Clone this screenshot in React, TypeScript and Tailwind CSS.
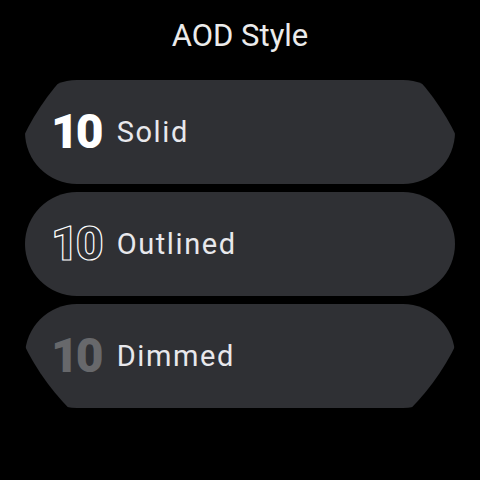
const options = [
  { label: 'Solid', numClass: 'text-white' },
  { label: 'Outlined', numClass: 'text-transparent [-webkit-text-stroke:1.2px_#ffffff]' },
  { label: 'Dimmed', numClass: 'text-[#67686b]' },
];

export default function App() {
  return (
    <div className="h-[480px] w-[480px] bg-black">
      <div
        className="flex h-[480px] w-[480px] flex-col items-center overflow-hidden rounded-full bg-black"
        style={{ fontFamily: 'Roboto, "Noto Sans", sans-serif' }}
      >
        <h1 className="pt-[18px] text-[31px] leading-[36px] font-normal text-[#ebebeb]">AOD Style</h1>
        <div className="mt-[26px] flex w-[430px] flex-col gap-[8px]">
          {options.map((o) => (
            <button
              key={o.label}
              type="button"
              className="flex h-[104px] w-full items-center rounded-full bg-[#2f3034] pl-[26px] text-left"
            >
              <span className={`text-[48px] leading-none font-black tracking-[-3px] ${o.numClass}`}>10</span>
              <span className="ml-[16px] text-[29px] leading-none font-normal tracking-[1.6px] text-[#e8e8ec]">
                {o.label}
              </span>
            </button>
          ))}
        </div>
      </div>
    </div>
  );
}
